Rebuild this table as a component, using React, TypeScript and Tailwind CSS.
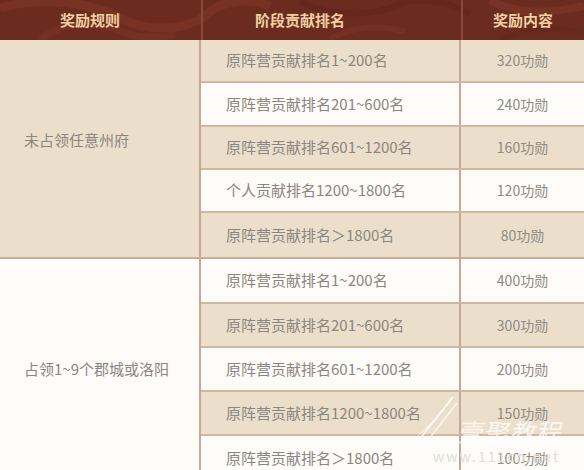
import React from "react";

type Row = { rank: string; reward: string };

const groups: { rule: string; rows: Row[]; ruleBg: string; firstTan: boolean; heights: string[]; ruleClass: string }[] = [
  {
    rule: "未占领任意州府",
    ruleBg: "bg-[#ebdfcb]",
    firstTan: true,
    ruleClass: "pb-4",
    heights: ["h-[43px]", "h-[44px]", "h-[43px]", "h-[43px]", "h-[44px]"],
    rows: [
      { rank: "原阵营贡献排名1~200名", reward: "320功勋" },
      { rank: "原阵营贡献排名201~600名", reward: "240功勋" },
      { rank: "原阵营贡献排名601~1200名", reward: "160功勋" },
      { rank: "个人贡献排名1200~1800名", reward: "120功勋" },
      { rank: "原阵营贡献排名＞1800名", reward: "80功勋" },
    ],
  },
  {
    rule: "占领1~9个郡城或洛阳",
    ruleBg: "bg-[#fefcf9]",
    firstTan: false,
    ruleClass: "pb-0",
    heights: ["h-[45px]", "h-[44px]", "h-[44px]", "h-[44px]", "h-[44px]"],
    rows: [
      { rank: "原阵营贡献排名1~200名", reward: "400功勋" },
      { rank: "原阵营贡献排名201~600名", reward: "300功勋" },
      { rank: "原阵营贡献排名601~1200名", reward: "200功勋" },
      { rank: "原阵营贡献排名1200~1800名", reward: "150功勋" },
      { rank: "原阵营贡献排名＞1800名", reward: "100功勋" },
    ],
  },
];

function HeaderSwirls() {
  return (
    <svg className="absolute inset-0 h-full w-full" viewBox="0 0 584 40" preserveAspectRatio="none">
      <path d="M0 8 C40 -4 90 2 120 18 C150 34 190 30 210 12 C225 0 250 -2 270 6" fill="none" stroke="#7e3627" strokeWidth="9" opacity="0.7" />
      <path d="M40 40 C60 22 95 20 118 30 C135 38 160 40 175 34" fill="none" stroke="#7a3426" strokeWidth="7" opacity="0.6" />
      <path d="M300 2 C340 20 380 14 400 4 C420 -4 450 2 470 14" fill="none" stroke="#5e2519" strokeWidth="6" opacity="0.6" />
      <path d="M330 40 C350 26 380 24 405 32" fill="none" stroke="#7d3628" strokeWidth="6" opacity="0.5" />
      <path d="M490 0 C510 12 540 16 584 6" fill="none" stroke="#7f3828" strokeWidth="8" opacity="0.6" />
      <path d="M500 40 C520 30 550 26 584 32" fill="none" stroke="#5f2519" strokeWidth="5" opacity="0.5" />
    </svg>
  );
}

export default function App() {
  return (
    <div
      className="relative h-[470px] w-[584px] overflow-hidden bg-[#fefcf9]"
      style={{ fontFamily: '"Noto Sans CJK SC", "Noto Sans", sans-serif' }}
    >
      {/* header */}
      <div className="relative flex h-[40px] bg-[#6b2b1f] text-[15px] font-bold text-[#f0cfa2]">
        <HeaderSwirls />
        <div className="relative flex w-[201px] items-center pl-[60px]">奖励规则</div>
        <div className="relative flex w-[260px] items-center border-l-2 border-[#8a4a3a] pl-[52px]">阶段贡献排名</div>
        <div className="relative flex flex-1 items-center border-l-2 border-[#8a4a3a] pl-[30px]">奖励内容</div>
      </div>

      {groups.map((g) => (
        <div key={g.rule} className="flex border-b-2 border-[#c9ac98]">
          <div
            className={`flex w-[201px] shrink-0 items-center border-r-2 border-[#c6a894] pl-[24px] text-[15px] text-[#8c8680] ${g.ruleBg} ${g.ruleClass}`}
          >
            {g.rule}
          </div>
          <div className="flex flex-1 flex-col">
            {g.rows.map((r, i) => {
              const tan = g.firstTan ? i % 2 === 0 : i % 2 === 1;
              const last = i === g.rows.length - 1;
              return (
                <div
                  key={r.rank}
                  className={`flex ${g.heights[i]} ${last ? "" : "border-b-2 border-[#d0b6a3]"} ${
                    tan ? "bg-[#ebdfcb]" : "bg-[#fefcf9]"
                  }`}
                >
                  <div className="flex w-[260px] items-center border-r-2 border-[#c6a894] pl-[25px] text-[15px] text-[#8c8680]">
                    {r.rank}
                  </div>
                  <div className="flex flex-1 items-center justify-center text-[14px] text-[#8f8a84]">
                    {r.reward}
                  </div>
                </div>
              );
            })}
          </div>
        </div>
      ))}

      {/* watermark */}
      <div className="pointer-events-none absolute left-[395px] top-[395px] h-[75px] w-[189px]">
        <svg className="absolute left-0 top-0" width="70" height="75" viewBox="0 0 70 75">
          <path d="M58 2 L4 70" stroke="#ffffff" strokeWidth="2" opacity="0.8" />
          <path d="M62 8 L12 72" stroke="#ffffff" strokeWidth="1.5" opacity="0.7" />
          <path d="M50 14 L2 62" stroke="#ffffff" strokeWidth="1" opacity="0.6" />
        </svg>
        <div className="absolute left-[62px] top-[24px] whitespace-nowrap text-[25px] italic leading-none tracking-[1px] text-white/75">
          壹聚教程
        </div>
        <div className="absolute left-[38px] top-[54px] whitespace-nowrap text-[14px] leading-none tracking-[2px] text-[#e2dcd5]">
          www.111cn.net
        </div>
      </div>
    </div>
  );
}
